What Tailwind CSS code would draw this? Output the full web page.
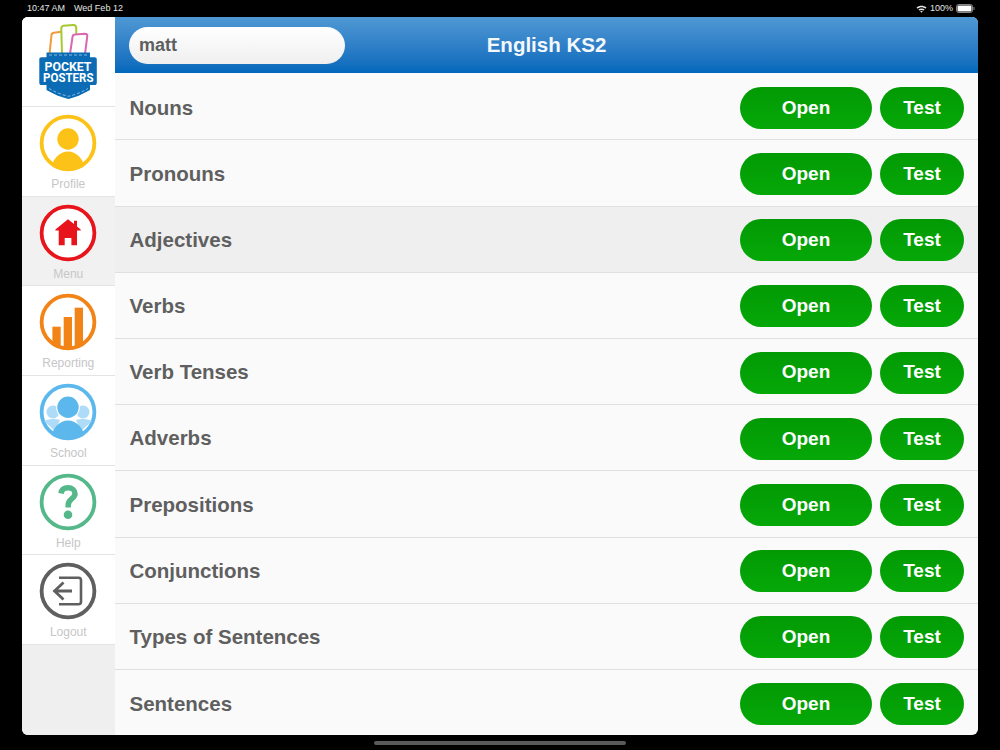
<!DOCTYPE html>
<html lang="en">
<head>
    <meta charset="UTF-8">
    <meta name="viewport" content="width=device-width, initial-scale=1.0">
    <title>Pocket Posters - English KS2</title>
    <script src="https://cdn.jsdelivr.net/npm/@tailwindcss/browser@4"></script>
</head>
<body class="bg-black w-[1000px] h-[750px] overflow-hidden font-['Liberation_Sans',Arial,sans-serif]">
    <!-- status bar -->
    <div class="h-[17px] pl-[27px] pr-[25px] flex items-center justify-between text-[#e6e6e6] text-[9px] leading-none">
        <div class="flex gap-[9px]"><span>10:47 AM</span><span>Wed Feb 12</span></div>
        <div class="flex items-center gap-[3px]">
            <svg width="11" height="8" viewBox="0 0 11 8"><path d="M0.5 2.6C3.3 0 7.7 0 10.5 2.6L9.4 3.7C7.2 1.7 3.8 1.7 1.6 3.7Z M2.4 4.5C4 3.1 7 3.1 8.6 4.5L7.5 5.6C6.4 4.8 4.6 4.8 3.5 5.6Z M4.3 6.4C5 5.9 6 5.9 6.7 6.4L5.5 7.8Z" fill="#e6e6e6"/></svg>
            <span>100%</span>
            <svg width="19" height="9" viewBox="0 0 19 9"><rect x="0.5" y="0.5" width="16" height="8" rx="2" fill="none" stroke="#888"/><rect x="1.5" y="1.5" width="14" height="6" rx="1" fill="#fff"/><rect x="17.5" y="3" width="1" height="3" fill="#888"/></svg>
        </div>
    </div>

    <div class="ml-[22px] w-[956px] h-[718px] rounded-[6px] overflow-hidden flex bg-[#fafafa]">
        <!-- sidebar -->
        <nav class="w-[93px] shrink-0 bg-[#efefef]">
            <div class="h-[90px] bg-white border-b border-[#e4e4e4]">
                <svg width="93" height="89" viewBox="22 17 93 89">
                    <g stroke-width="2" fill="#fff" stroke-linejoin="round">
                        <path d="M49.500 54L51.500 35C51.700 33.500 52.500 33 54 32.800L63 31.500V54Z" stroke="#f29a3a"/>
                        <path d="M62 54L61.300 28.500C61.300 27 62 26 63.500 25.800L73 25C75 24.800 76 26 76.200 27.500L76.500 54Z" stroke="#a5c92f"/>
                        <path d="M70 54L72.500 37C72.700 35.500 73.500 34.500 75 34.500L85 33.800C86.500 33.800 87.300 34.600 87.300 36L85 54Z" stroke="#d968b4"/>
                    </g>
                    <path d="M46.500 52.500H90V57.300H94.500C96 57.300 96.800 58.100 96.800 59.600V82.700C96.800 84.200 96 85 94.500 85H90V90C82 94.500 75 97.500 68.500 99C62 97.500 54 94.500 46.500 90V85H41.600C40.100 85 39.300 84.200 39.300 82.700V59.600C39.300 58.100 40.100 57.300 41.600 57.300H46.500Z" fill="#0b6cb5"/>
                    <path d="M49 55H88 M49 88.500C55 92 62 95 68.500 96.300C75 95 82 92 88 88.500" fill="none" stroke="#a8d0ec" stroke-width="0.800" stroke-dasharray="3 2"/>
                    <g fill="#fff" font-family="Roboto" font-size="13.500" font-weight="700" text-anchor="middle">
                        <text x="68" y="70.600" textLength="47" lengthAdjust="spacingAndGlyphs">POCKET</text>
                        <text x="68.300" y="82.400" textLength="50.500" lengthAdjust="spacingAndGlyphs">POSTERS</text>
                    </g>
                </svg>
            </div>

            <a class="h-[89.7px] bg-white border-b border-[#e4e4e4] flex flex-col items-center pt-[6px] pr-[0.500px]">
                <svg width="60" height="60" viewBox="0 0 60 60">
                    <defs>
                        <clipPath id="inner"><circle cx="30" cy="30" r="27"/></clipPath>
                    </defs>
                    <circle cx="30" cy="30" r="26.400" fill="#fff" stroke="#fdc217" stroke-width="3.800"/>
                    <circle cx="30" cy="26" r="10.700" fill="#fdc217"/>
                    <ellipse cx="30" cy="57" rx="16.500" ry="18.500" fill="#fdc217" clip-path="url(#inner)"/>
                </svg>
                <span class="text-[12px] leading-none mt-[5px] text-[#c6c6c6]">Profile</span>
            </a>

            <a class="h-[89.7px] bg-[#f1f1f1] border-b border-[#e4e4e4] flex flex-col items-center pt-[6px] pr-[0.500px]">
                <svg width="60" height="60" viewBox="0 0 60 60">
                    <circle cx="30" cy="30" r="26.400" fill="#fff" stroke="#e8141c" stroke-width="3.800"/>
                    <path d="M30 16.300L36 21V17.800H39V23.400L42.700 26.600V27.500H39V42.300H33.400V35H26.700V42.300H20.700V27.500H17.400V26.600Z" fill="#e8141c"/>
                </svg>
                <span class="text-[12px] leading-none mt-[5px] text-[#c6c6c6]">Menu</span>
            </a>

            <a class="h-[89.7px] bg-white border-b border-[#e4e4e4] flex flex-col items-center pt-[6px] pr-[0.500px]">
                <svg width="60" height="60" viewBox="0 0 60 60">
                    <circle cx="30" cy="30" r="26.400" fill="#fff" stroke="#f28316" stroke-width="3.800"/>
                    <g fill="#f28316" clip-path="url(#inner)">
                        <rect x="14.400" y="34.700" width="8.300" height="25"/>
                        <rect x="25.700" y="25" width="8.300" height="35"/>
                        <rect x="36.700" y="15.700" width="8.300" height="44"/>
                    </g>
                </svg>
                <span class="text-[12px] leading-none mt-[5px] text-[#c6c6c6]">Reporting</span>
            </a>

            <a class="h-[89.7px] bg-white border-b border-[#e4e4e4] flex flex-col items-center pt-[6px] pr-[0.500px]">
                <svg width="60" height="60" viewBox="0 0 60 60">
                    <circle cx="30" cy="30" r="26.400" fill="#fff" stroke="#5cb8ec" stroke-width="3.800"/>
                    <g fill="#aedcf8">
                        <circle cx="15" cy="30" r="6.500"/>
                        <circle cx="45" cy="30" r="6.500"/>
                        <path d="M6 39C12 36.500 18 36.500 22 38L17 49Z M54 39C48 36.500 42 36.500 38 38L43 49Z" clip-path="url(#inner)"/>
                    </g>
                    <circle cx="30" cy="25.300" r="11.800" fill="#fff"/>
                    <circle cx="30" cy="25.300" r="10.700" fill="#5cb8ec"/>
                    <ellipse cx="30" cy="57" rx="16.500" ry="18.500" fill="#5cb8ec" clip-path="url(#inner)"/>
                </svg>
                <span class="text-[12px] leading-none mt-[5px] text-[#c6c6c6]">School</span>
            </a>

            <a class="h-[89.7px] bg-white border-b border-[#e4e4e4] flex flex-col items-center pt-[6px] pr-[0.500px]">
                <svg width="60" height="60" viewBox="0 0 60 60">
                    <circle cx="30" cy="30" r="26.400" fill="#fff" stroke="#55b88a" stroke-width="3.800"/>
                    <path d="M23 21.500C23.500 18 26 15.800 30 15.800C34.200 15.800 37 18.300 37 21.800C37 26.500 30.200 27 30.200 33V35.500" fill="none" stroke="#55b88a" stroke-width="5.500"/>
                    <circle cx="30" cy="42.700" r="4.300" fill="#55b88a"/>
                </svg>
                <span class="text-[12px] leading-none mt-[5px] text-[#c6c6c6]">Help</span>
            </a>

            <a class="h-[89.7px] bg-white border-b border-[#e4e4e4] flex flex-col items-center pt-[6px] pr-[0.500px]">
                <svg width="60" height="60" viewBox="0 0 60 60">
                    <circle cx="30" cy="30" r="26.400" fill="#fff" stroke="#5f5f5f" stroke-width="3.800"/>
                    <path d="M21 16.800H40.500C42 16.800 43 17.800 43 19.300V40.700C43 42.200 42 43.200 40.500 43.200H21" fill="none" stroke="#5f5f5f" stroke-width="2.600"/>
                    <path d="M34 30H16.500M25.500 21.500L16.500 30L25.500 38.500" fill="none" stroke="#5f5f5f" stroke-width="2.800"/>
                </svg>
                <span class="text-[12px] leading-none mt-[5px] text-[#c6c6c6]">Logout</span>
            </a>
        </nav>

        <!-- main -->
        <main class="flex-1 flex flex-col min-w-0">
            <header class="relative h-[56px] shrink-0 bg-linear-to-b from-[#4f98d4] to-[#0068bb] flex items-center justify-center">
                <input value="matt" class="absolute left-[14px] top-[10px] w-[216px] h-[37px] rounded-full bg-linear-to-b from-white to-[#efefef] pl-[10px] text-[18px] font-bold text-[#5f5f5f] outline-none">
                <h1 class="text-[20.500px] font-bold text-[#f4f8fb]">English KS2</h1>
            </header>

            <div class="flex-1 overflow-hidden pt-[1.300px]">
                <div class="h-[66.200px] pt-[2px] flex items-center gap-[8px] pl-[14.500px] pr-[14px] border-b border-[#e0e0e0]">
                    <span class="flex-1 text-[20.500px] font-bold text-[#5f5f5f]">Nouns</span>
                    <button class="w-[132px] h-[42px] rounded-full bg-linear-to-b from-[#029a04] to-[#06a808] text-white text-[19px] font-bold">Open</button>
                    <button class="w-[84px] h-[42px] rounded-full bg-linear-to-b from-[#029a04] to-[#06a808] text-white text-[19px] font-bold">Test</button>
                </div>
                <div class="h-[66.200px] pt-[2px] flex items-center gap-[8px] pl-[14.500px] pr-[14px] border-b border-[#e0e0e0]">
                    <span class="flex-1 text-[20.500px] font-bold text-[#5f5f5f]">Pronouns</span>
                    <button class="w-[132px] h-[42px] rounded-full bg-linear-to-b from-[#029a04] to-[#06a808] text-white text-[19px] font-bold">Open</button>
                    <button class="w-[84px] h-[42px] rounded-full bg-linear-to-b from-[#029a04] to-[#06a808] text-white text-[19px] font-bold">Test</button>
                </div>
                <div class="h-[66.200px] pt-[2px] flex items-center gap-[8px] pl-[14.500px] pr-[14px] border-b border-[#e0e0e0] bg-[#efefef]">
                    <span class="flex-1 text-[20.500px] font-bold text-[#5f5f5f]">Adjectives</span>
                    <button class="w-[132px] h-[42px] rounded-full bg-linear-to-b from-[#029a04] to-[#06a808] text-white text-[19px] font-bold">Open</button>
                    <button class="w-[84px] h-[42px] rounded-full bg-linear-to-b from-[#029a04] to-[#06a808] text-white text-[19px] font-bold">Test</button>
                </div>
                <div class="h-[66.200px] pt-[2px] flex items-center gap-[8px] pl-[14.500px] pr-[14px] border-b border-[#e0e0e0]">
                    <span class="flex-1 text-[20.500px] font-bold text-[#5f5f5f]">Verbs</span>
                    <button class="w-[132px] h-[42px] rounded-full bg-linear-to-b from-[#029a04] to-[#06a808] text-white text-[19px] font-bold">Open</button>
                    <button class="w-[84px] h-[42px] rounded-full bg-linear-to-b from-[#029a04] to-[#06a808] text-white text-[19px] font-bold">Test</button>
                </div>
                <div class="h-[66.200px] pt-[2px] flex items-center gap-[8px] pl-[14.500px] pr-[14px] border-b border-[#e0e0e0]">
                    <span class="flex-1 text-[20.500px] font-bold text-[#5f5f5f]">Verb Tenses</span>
                    <button class="w-[132px] h-[42px] rounded-full bg-linear-to-b from-[#029a04] to-[#06a808] text-white text-[19px] font-bold">Open</button>
                    <button class="w-[84px] h-[42px] rounded-full bg-linear-to-b from-[#029a04] to-[#06a808] text-white text-[19px] font-bold">Test</button>
                </div>
                <div class="h-[66.200px] pt-[2px] flex items-center gap-[8px] pl-[14.500px] pr-[14px] border-b border-[#e0e0e0]">
                    <span class="flex-1 text-[20.500px] font-bold text-[#5f5f5f]">Adverbs</span>
                    <button class="w-[132px] h-[42px] rounded-full bg-linear-to-b from-[#029a04] to-[#06a808] text-white text-[19px] font-bold">Open</button>
                    <button class="w-[84px] h-[42px] rounded-full bg-linear-to-b from-[#029a04] to-[#06a808] text-white text-[19px] font-bold">Test</button>
                </div>
                <div class="h-[66.200px] pt-[2px] flex items-center gap-[8px] pl-[14.500px] pr-[14px] border-b border-[#e0e0e0]">
                    <span class="flex-1 text-[20.500px] font-bold text-[#5f5f5f]">Prepositions</span>
                    <button class="w-[132px] h-[42px] rounded-full bg-linear-to-b from-[#029a04] to-[#06a808] text-white text-[19px] font-bold">Open</button>
                    <button class="w-[84px] h-[42px] rounded-full bg-linear-to-b from-[#029a04] to-[#06a808] text-white text-[19px] font-bold">Test</button>
                </div>
                <div class="h-[66.200px] pt-[2px] flex items-center gap-[8px] pl-[14.500px] pr-[14px] border-b border-[#e0e0e0]">
                    <span class="flex-1 text-[20.500px] font-bold text-[#5f5f5f]">Conjunctions</span>
                    <button class="w-[132px] h-[42px] rounded-full bg-linear-to-b from-[#029a04] to-[#06a808] text-white text-[19px] font-bold">Open</button>
                    <button class="w-[84px] h-[42px] rounded-full bg-linear-to-b from-[#029a04] to-[#06a808] text-white text-[19px] font-bold">Test</button>
                </div>
                <div class="h-[66.200px] pt-[2px] flex items-center gap-[8px] pl-[14.500px] pr-[14px] border-b border-[#e0e0e0]">
                    <span class="flex-1 text-[20.500px] font-bold text-[#5f5f5f]">Types of Sentences</span>
                    <button class="w-[132px] h-[42px] rounded-full bg-linear-to-b from-[#029a04] to-[#06a808] text-white text-[19px] font-bold">Open</button>
                    <button class="w-[84px] h-[42px] rounded-full bg-linear-to-b from-[#029a04] to-[#06a808] text-white text-[19px] font-bold">Test</button>
                </div>
                <div class="h-[66.200px] pt-[2px] flex items-center gap-[8px] pl-[14.500px] pr-[14px]">
                    <span class="flex-1 text-[20.500px] font-bold text-[#5f5f5f]">Sentences</span>
                    <button class="w-[132px] h-[42px] rounded-full bg-linear-to-b from-[#029a04] to-[#06a808] text-white text-[19px] font-bold">Open</button>
                    <button class="w-[84px] h-[42px] rounded-full bg-linear-to-b from-[#029a04] to-[#06a808] text-white text-[19px] font-bold">Test</button>
                </div>
            </div>
        </main>
    </div>

    <!-- home indicator -->
    <div class="mx-auto mt-[6px] w-[252px] h-[4px] rounded-full bg-[#5a5a5a]"></div>
</body>
</html>
